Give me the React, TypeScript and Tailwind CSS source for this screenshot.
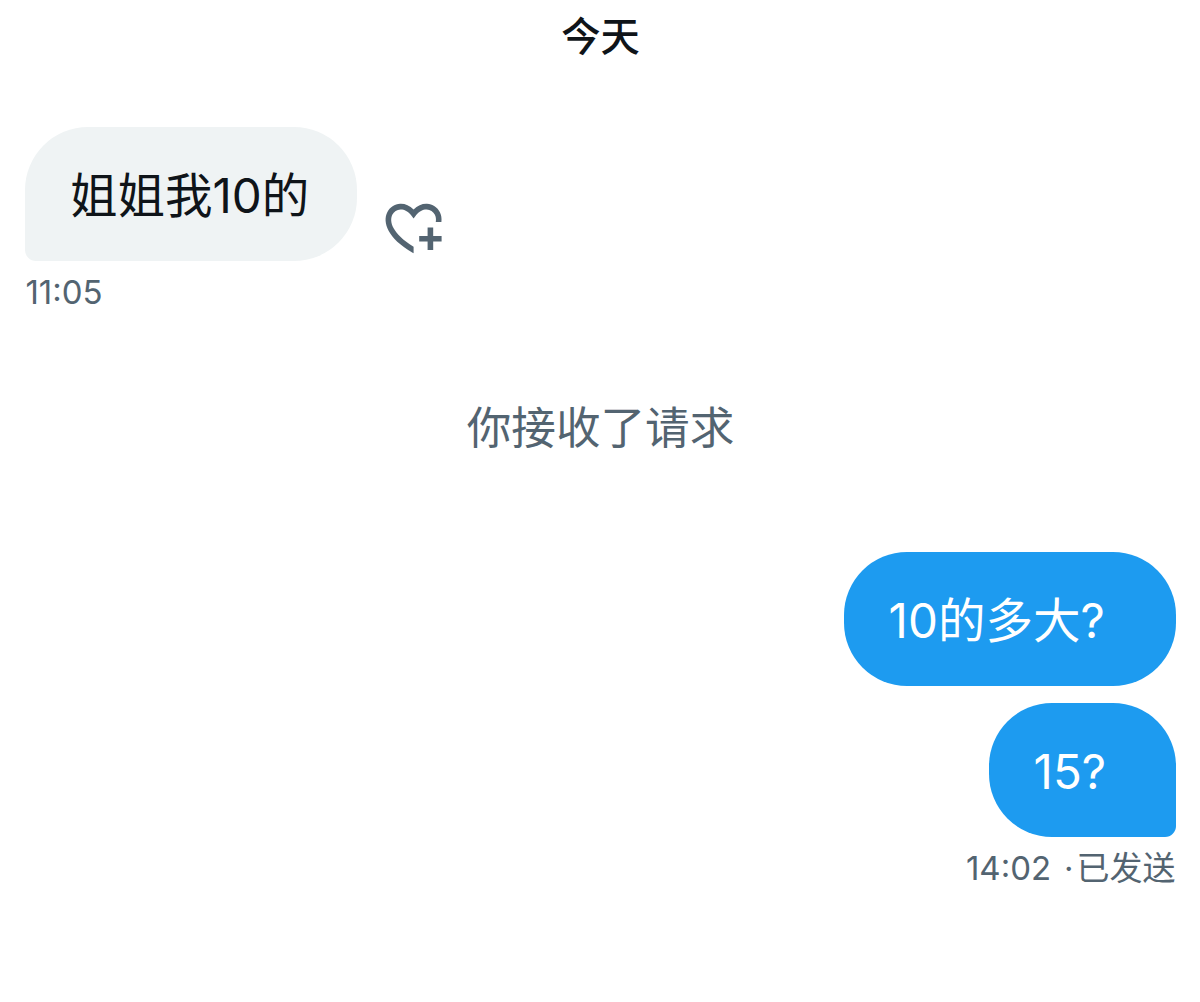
import React from 'react';

interface BubbleProps {
  text: string;
  className: string;
}

const Bubble: React.FC<BubbleProps> = ({ text, className }) => (
  <div className={`h-[134px] flex items-center pt-[2px] text-[47.5px] leading-none whitespace-nowrap ${className}`}>
    <span>{text}</span>
  </div>
);

const HeartPlusIcon: React.FC = () => (
  <svg viewBox="0 0 24 24" className="w-[67.2px] h-[67.2px]" fill="currentColor" aria-hidden="true">
    <path d="M17 12v3h-2.998v2h3v3h2v-3h3v-2h-3.001v-3H17zm-5 6.839c-3.871-2.34-6.053-4.639-7.127-6.609-1.112-2.04-1.031-3.7-.479-4.82.561-1.13 1.667-1.84 2.91-1.91 1.222-.06 2.68.51 3.892 2.16l.806 1.09.805-1.09c1.211-1.65 2.668-2.22 3.89-2.16 1.242.07 2.347.78 2.908 1.91.334.677.49 1.554.321 2.59h2.011c.153-1.283-.039-2.469-.539-3.48-.887-1.79-2.647-2.91-4.601-3.01-1.65-.09-3.367.56-4.796 2.01-1.43-1.45-3.147-2.1-4.798-2.01-1.954.1-3.714 1.22-4.601 3.01-.896 1.81-.846 4.17.514 6.67 1.353 2.48 4.003 5.12 8.382 7.67l.502.299v-2.32z" />
  </svg>
);

const App: React.FC = () => {
  return (
    <main
      lang="zh-CN"
      className="w-[1200px] h-[1002px] overflow-hidden bg-white flex flex-col pl-[25.4px] pr-[24.4px] pt-[17.4px] font-['Inter','Noto_Sans_CJK_SC',sans-serif] text-[#536471]"
    >
      <h2 className="h-10 text-center text-[39.3px] leading-10 font-medium text-[#0f1419]">今天</h2>

      {/* Received */}
      <div className="mt-[70px] flex items-end">
        <Bubble
          text="姐姐我10的"
          className="w-[332px] pl-[44.6px] bg-[#eff3f4] text-[#0f1419] rounded-[63px] rounded-bl-[11px]"
        />
        <button className="ml-[23px]" aria-label="添加心情">
          <HeartPlusIcon />
        </button>
      </div>
      <time className="mt-[11px] h-10 text-[33px] leading-10">11:05</time>

      <p className="mt-[90px] h-[52px] text-center text-[44.6px] leading-[52px]">你接收了请求</p>

      {/* Sent */}
      <div className="mt-[98px] flex flex-col items-end gap-[17px]">
        <Bubble text="10的多大?" className="w-[332px] pl-[45px] bg-[#1d9bf0] text-white rounded-[63px]" />
        <Bubble
          text="15?"
          className="w-[187px] pl-[45px] bg-[#1d9bf0] text-white rounded-[63px] rounded-br-[11px]"
        />
      </div>
      <div className="mt-[11px] h-10 flex justify-end text-[33px] leading-10 whitespace-nowrap">
        <time>14:02</time>
        <span className="ml-[13px] mr-[3px]">·</span>
        <span>已发送</span>
      </div>
    </main>
  );
};

export default App;
